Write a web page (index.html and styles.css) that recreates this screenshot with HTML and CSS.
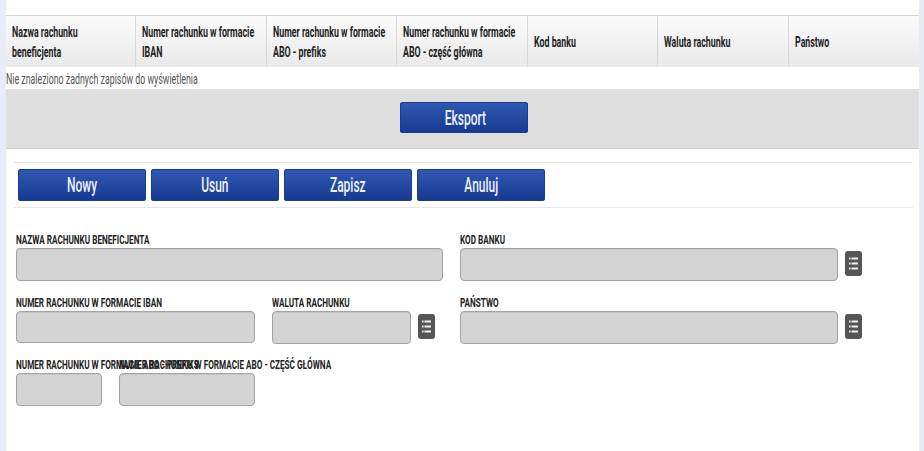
FILE: index.html
```html
<!DOCTYPE html>
<html lang="pl">
<head>
<meta charset="utf-8">
<title>Rachunki</title>
<link rel="stylesheet" href="styles.css">
</head>
<body>
<main class="content">
  <div class="top-gap"></div>
  <div class="thead">
    <div class="th"><span class="squeeze">Nazwa rachunku<br>beneficjenta</span></div>
    <div class="th"><span class="squeeze">Numer rachunku w formacie<br>IBAN</span></div>
    <div class="th"><span class="squeeze">Numer rachunku w formacie<br>ABO - prefiks</span></div>
    <div class="th"><span class="squeeze">Numer rachunku w formacie<br>ABO - część główna</span></div>
    <div class="th"><span class="squeeze">Kod banku</span></div>
    <div class="th"><span class="squeeze">Waluta rachunku</span></div>
    <div class="th"><span class="squeeze">Państwo</span></div>
  </div>
  <div class="empty"><span class="squeeze">Nie znaleziono żadnych zapisów do wyświetlenia</span></div>
  <div class="export-bar"><button class="btn btn-export"><span class="squeeze-c">Eksport</span></button></div>
  <div class="actions">
    <button class="btn"><span class="squeeze-c">Nowy</span></button>
    <button class="btn"><span class="squeeze-c">Usuń</span></button>
    <button class="btn"><span class="squeeze-c">Zapisz</span></button>
    <button class="btn"><span class="squeeze-c">Anuluj</span></button>
  </div>
  <form class="form">
    <div class="col-left">
      <div class="field"><label class="label"><span class="squeeze">Nazwa rachunku beneficjenta</span></label><div class="input w-name"></div></div>
      <div class="row row-2">
        <div class="field"><label class="label"><span class="squeeze">Numer rachunku w formacie IBAN</span></label><div class="input w-iban"></div></div>
        <div class="field"><label class="label"><span class="squeeze">Waluta rachunku</span></label>
          <div class="picker"><div class="input w-cur"></div>
            <button type="button" class="list-btn"><svg viewBox="0 0 17 25" width="17" height="25"><path d="M4 7.5h1.5M6.5 7.5h6.5M4 12.5h1.5M6.5 12.5h6.5M4 17.5h1.5M6.5 17.5h6.5" stroke="#f2f2f2" stroke-width="2" fill="none"/></svg></button>
          </div>
        </div>
      </div>
      <div class="row row-3">
        <div class="field"><label class="label"><span class="squeeze">Numer rachunku w formacie ABO - prefiks</span></label><div class="input w-pre"></div></div>
        <div class="field"><label class="label"><span class="squeeze">Numer rachunku w formacie ABO - część główna</span></label><div class="input w-main"></div></div>
      </div>
    </div>
    <div class="col-right">
      <div class="field"><label class="label"><span class="squeeze">Kod banku</span></label>
        <div class="picker"><div class="input w-right"></div>
          <button type="button" class="list-btn"><svg viewBox="0 0 17 25" width="17" height="25"><path d="M4 7.5h1.5M6.5 7.5h6.5M4 12.5h1.5M6.5 12.5h6.5M4 17.5h1.5M6.5 17.5h6.5" stroke="#f2f2f2" stroke-width="2" fill="none"/></svg></button>
        </div>
      </div>
      <div class="field row-2b"><label class="label"><span class="squeeze">Państwo</span></label>
        <div class="picker"><div class="input w-right"></div>
          <button type="button" class="list-btn"><svg viewBox="0 0 17 25" width="17" height="25"><path d="M4 7.5h1.5M6.5 7.5h6.5M4 12.5h1.5M6.5 12.5h6.5M4 17.5h1.5M6.5 17.5h6.5" stroke="#f2f2f2" stroke-width="2" fill="none"/></svg></button>
        </div>
      </div>
    </div>
  </form>
</main>
</body>
</html>
```
FILE: styles.css
```css
html, body { margin: 0; padding: 0; height: 451px; overflow: hidden; }
body { background: #e9ecf8; font-family: Roboto, "Liberation Sans", sans-serif; }
.content { margin: 0 5px 0 6px; height: 451px; background: #fff; overflow: hidden; }
.top-gap { height: 15px; }
.squeeze { display: inline-block; white-space: nowrap; transform: scaleX(.63); transform-origin: left center; }
.squeeze-c { display: inline-block; white-space: nowrap; transform: scaleX(.6); transform-origin: center; }
.thead { display: grid; grid-template-columns: repeat(7, minmax(0, 1fr)); height: 52px; box-sizing: border-box; border-top: 1px solid #d4d4d4; background: linear-gradient(#fbfbfb, #e9e9e9); }
.th { display: flex; align-items: center; padding: 1px 0 0 6px; border-right: 1px solid #d8d8d8; font-size: 14px; font-weight: 700; line-height: 20px; color: #222; }
.th:last-child { border-right: 0; }
.empty { height: 22px; line-height: 24px; font-size: 14px; color: #555; }
.export-bar { height: 60px; box-sizing: border-box; padding-top: 13px; display: flex; justify-content: center; background: #dedede; border-bottom: 1px solid #ccc; }
.btn { width: 128px; height: 32px; padding: 0; border: 0; border-radius: 3px; background: linear-gradient(#3159b4, #16398f); box-shadow: inset 0 0 0 1px #1c3c8c; color: #eef2ff; font-family: inherit; font-size: 20px; font-weight: 500; line-height: 32px; }
.btn-export { height: 31px; margin-left: -6px; position: relative; left: 4px; }
.btn-export .squeeze-c { margin-left: 3px; }
.actions { margin: 13px 6px 0 8px; padding: 6px 0 6px 4px; display: flex; gap: 5px; border-top: 1px solid #e8e8e8; border-bottom: 1px solid #e8e8e8; }
.form { display: flex; margin: 27px 0 0 10px; }
.col-left { width: 444px; }
.col-right { width: 410px; }
.field { display: block; }
.label { display: block; width: 0; height: 13px; font-size: 12px; font-weight: 700; line-height: 11px; text-transform: uppercase; color: #222; }
.label .squeeze { transform: scaleX(.68); }
.input { height: 33px; box-sizing: border-box; background: #d4d4d4; border: 1px solid #a3a3a3; border-radius: 4px; box-shadow: inset 0 1px 1px #c8c8c8; }
.row { display: flex; gap: 17px; }
.row-2 { margin-top: 17px; }
.row-2b { margin-top: 17px; }
.row-3 { margin-top: 16px; }
.w-name { width: 427px; }
.w-iban { width: 239px; height: 32px; }
.w-cur { width: 139px; }
.w-pre { width: 86px; }
.w-main { width: 136px; }
.w-right { width: 378px; flex: none; }
.picker { display: flex; gap: 7px; align-items: flex-start; }
.list-btn { display: block; flex: none; width: 17px; height: 25px; margin-top: 3px; padding: 0; border: 0; border-radius: 3px; background: #555; }
.list-btn svg { display: block; }
```
